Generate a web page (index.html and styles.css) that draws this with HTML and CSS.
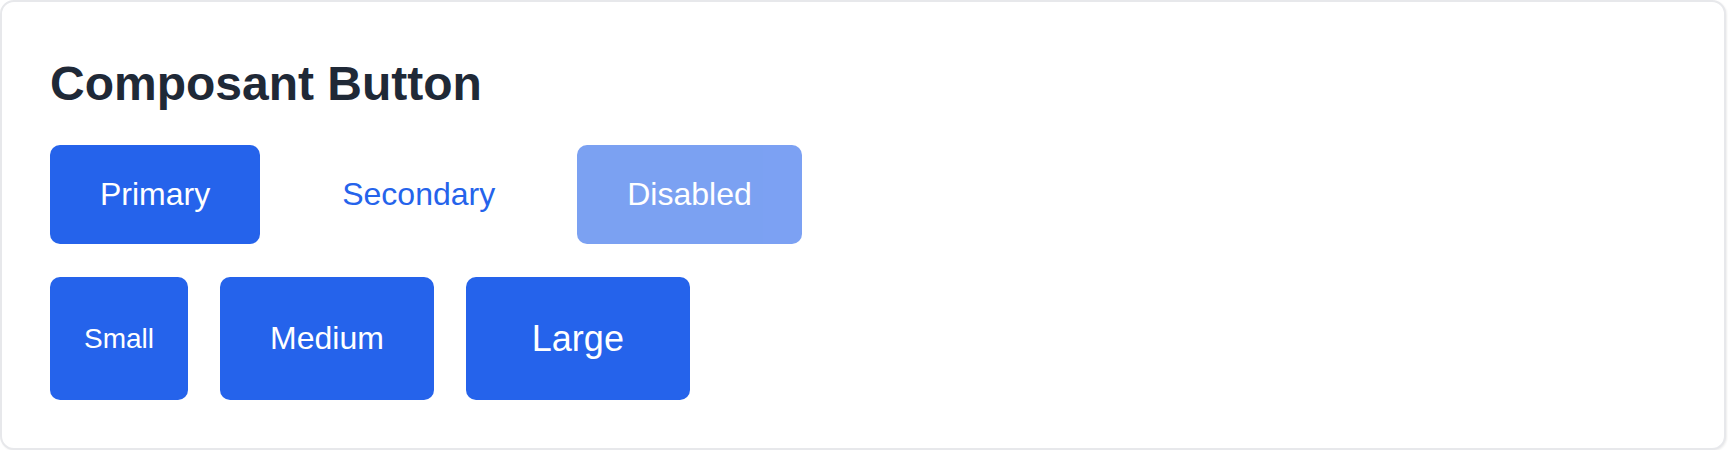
FILE: index.html
```html
<!DOCTYPE html>
<html lang="fr">
<head>
<meta charset="utf-8">
<title>Composant Button</title>
<link rel="stylesheet" href="styles.css">
</head>
<body>
  <section class="card">
    <h1 class="title">Composant Button</h1>
    <div class="row">
      <button class="btn btn-primary btn-md">Primary</button>
      <button class="btn btn-secondary btn-md">Secondary</button>
      <button class="btn btn-primary btn-md" disabled>Disabled</button>
    </div>
    <div class="row">
      <button class="btn btn-primary btn-sm">Small</button>
      <button class="btn btn-primary btn-md">Medium</button>
      <button class="btn btn-primary btn-lg">Large</button>
    </div>
  </section>
</body>
</html>
```

FILE: styles.css
```css
html, body {
  margin: 0;
  padding: 0;
  background: #ffffff;
}

body {
  font-family: "Liberation Sans", Arial, sans-serif;
}

.card {
  box-sizing: border-box;
  width: 1726px;
  margin: 0;
  padding: 54px 48px 48px;
  background: #ffffff;
  border: 2px solid #e7e8eb;
  border-radius: 14px;
  box-shadow: 1px 1px 2px rgba(0, 0, 0, 0.07);
}

.title {
  margin: 0 0 34px;
  font-size: 48px;
  font-weight: 700;
  line-height: 1.15;
  color: #1f2937;
}

.row {
  display: flex;
  gap: 32px;
  margin-bottom: 33px;
}

.row:last-child {
  margin-bottom: 0;
}

.btn {
  font-family: "Liberation Sans", Arial, sans-serif;
  line-height: 1.15;
  border: none;
  border-radius: 10px;
  cursor: pointer;
}

.btn-primary {
  background: #2563eb;
  color: #ffffff;
}

.btn-secondary {
  background: transparent;
  color: #2563eb;
}

.btn:disabled {
  opacity: 0.6;
  cursor: not-allowed;
}

.btn-sm {
  font-size: 28px;
  padding: 20px 34px;
}

.btn-md {
  font-size: 32px;
  padding: 31px 50px;
}

.btn-lg {
  font-size: 36px;
  padding: 41px 66px;
}
```
